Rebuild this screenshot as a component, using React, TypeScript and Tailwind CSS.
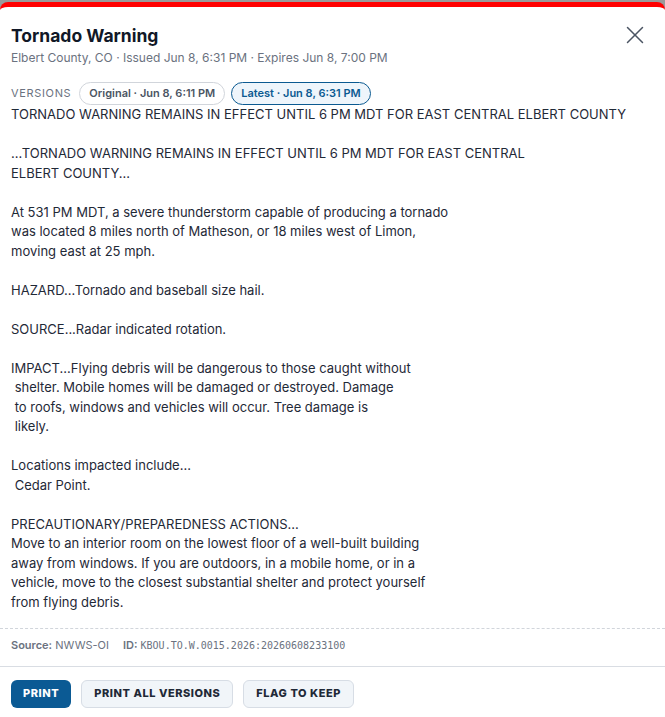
import { X } from "lucide-react";

// Alert detail modal: header, version pills, raw product text, meta + actions.

const BODY = `TORNADO WARNING REMAINS IN EFFECT UNTIL 6 PM MDT FOR EAST CENTRAL ELBERT COUNTY

...TORNADO WARNING REMAINS IN EFFECT UNTIL 6 PM MDT FOR EAST CENTRAL
ELBERT COUNTY...

At 531 PM MDT, a severe thunderstorm capable of producing a tornado
was located 8 miles north of Matheson, or 18 miles west of Limon,
moving east at 25 mph.

HAZARD...Tornado and baseball size hail.

SOURCE...Radar indicated rotation.

IMPACT...Flying debris will be dangerous to those caught without
 shelter. Mobile homes will be damaged or destroyed. Damage
 to roofs, windows and vehicles will occur. Tree damage is
 likely.

Locations impacted include...
 Cedar Point.

PRECAUTIONARY/PREPAREDNESS ACTIONS...
Move to an interior room on the lowest floor of a well-built building
away from windows. If you are outdoors, in a mobile home, or in a
vehicle, move to the closest substantial shelter and protect yourself
from flying debris.`;

const pill =
  "rounded-full border px-[9px] h-[23px] flex items-center text-[11px] font-semibold";

const btn =
  "h-[28px] rounded-md px-3 text-[11px] font-extrabold uppercase tracking-[0.05em]";

export default function App() {
  return (
    <div className="h-[717px] overflow-hidden bg-[#9a9a9a] pt-[2px] font-['Inter',sans-serif]">
      <div className="flex h-full flex-col rounded-t-lg border-t-[5px] border-[#ff0000] bg-white">
        <div className="flex items-start justify-between px-[11px] pt-[16px]">
          <div>
            <h2 className="text-[17.5px] font-bold leading-[25px] text-[#111827]">
              Tornado Warning
            </h2>
            <p className="mt-[1px] text-[12px] leading-[18px] text-[#6b7280]">
              Elbert County, CO · Issued Jun 8, 6:31 PM · Expires Jun 8, 7:00 PM
            </p>
          </div>
          <button className="mr-[4px] mt-[-3px] text-[#4b5563]">
            <X size={30} strokeWidth={1.2} />
          </button>
        </div>

        <div className="mt-[15px] flex items-center gap-[6px] px-[11px]">
          <span className="mr-[2px] text-[11px] uppercase tracking-[0.06em] text-[#6b7280]">
            Versions
          </span>
          <span className={`${pill} border-[#d1d5db] bg-white text-[#4b5563]`}>
            Original · Jun 8, 6:11 PM
          </span>
          <span className={`${pill} border-[#0b5a91] bg-[#eef5fb] text-[#0b5a91]`}>
            Latest · Jun 8, 6:31 PM
          </span>
        </div>

        <pre className="whitespace-pre-wrap px-[11px] font-['Inter',sans-serif] text-[13px] leading-[19.5px] text-[#1f2937]">
          {BODY}
        </pre>

        <div className="mt-[16px] flex items-center gap-[14px] border-t border-dashed border-[#d1d5db] px-[11px] pb-[12px] pt-[8px] text-[11px] text-[#6b7280]">
          <span>
            <span className="font-semibold">Source:</span> NWWS-OI
          </span>
          <span>
            <span className="font-semibold">ID:</span>{" "}
            <span className="font-['DejaVu_Sans_Mono',monospace] text-[10px]">
              KBOU.TO.W.0015.2026:20260608233100
            </span>
          </span>
        </div>

        <div className="flex gap-[10px] border-t border-[#d9dde3] px-[11px] pt-[13px]">
          <button className={`${btn} bg-[#0b5a94] text-white`}>Print</button>
          <button className={`${btn} border border-[#d7dde5] bg-[#f1f5f9] text-[#1f2937]`}>
            Print All Versions
          </button>
          <button className={`${btn} border border-[#d7dde5] bg-[#f1f5f9] text-[#1f2937]`}>
            Flag to Keep
          </button>
        </div>
      </div>
    </div>
  );
}
